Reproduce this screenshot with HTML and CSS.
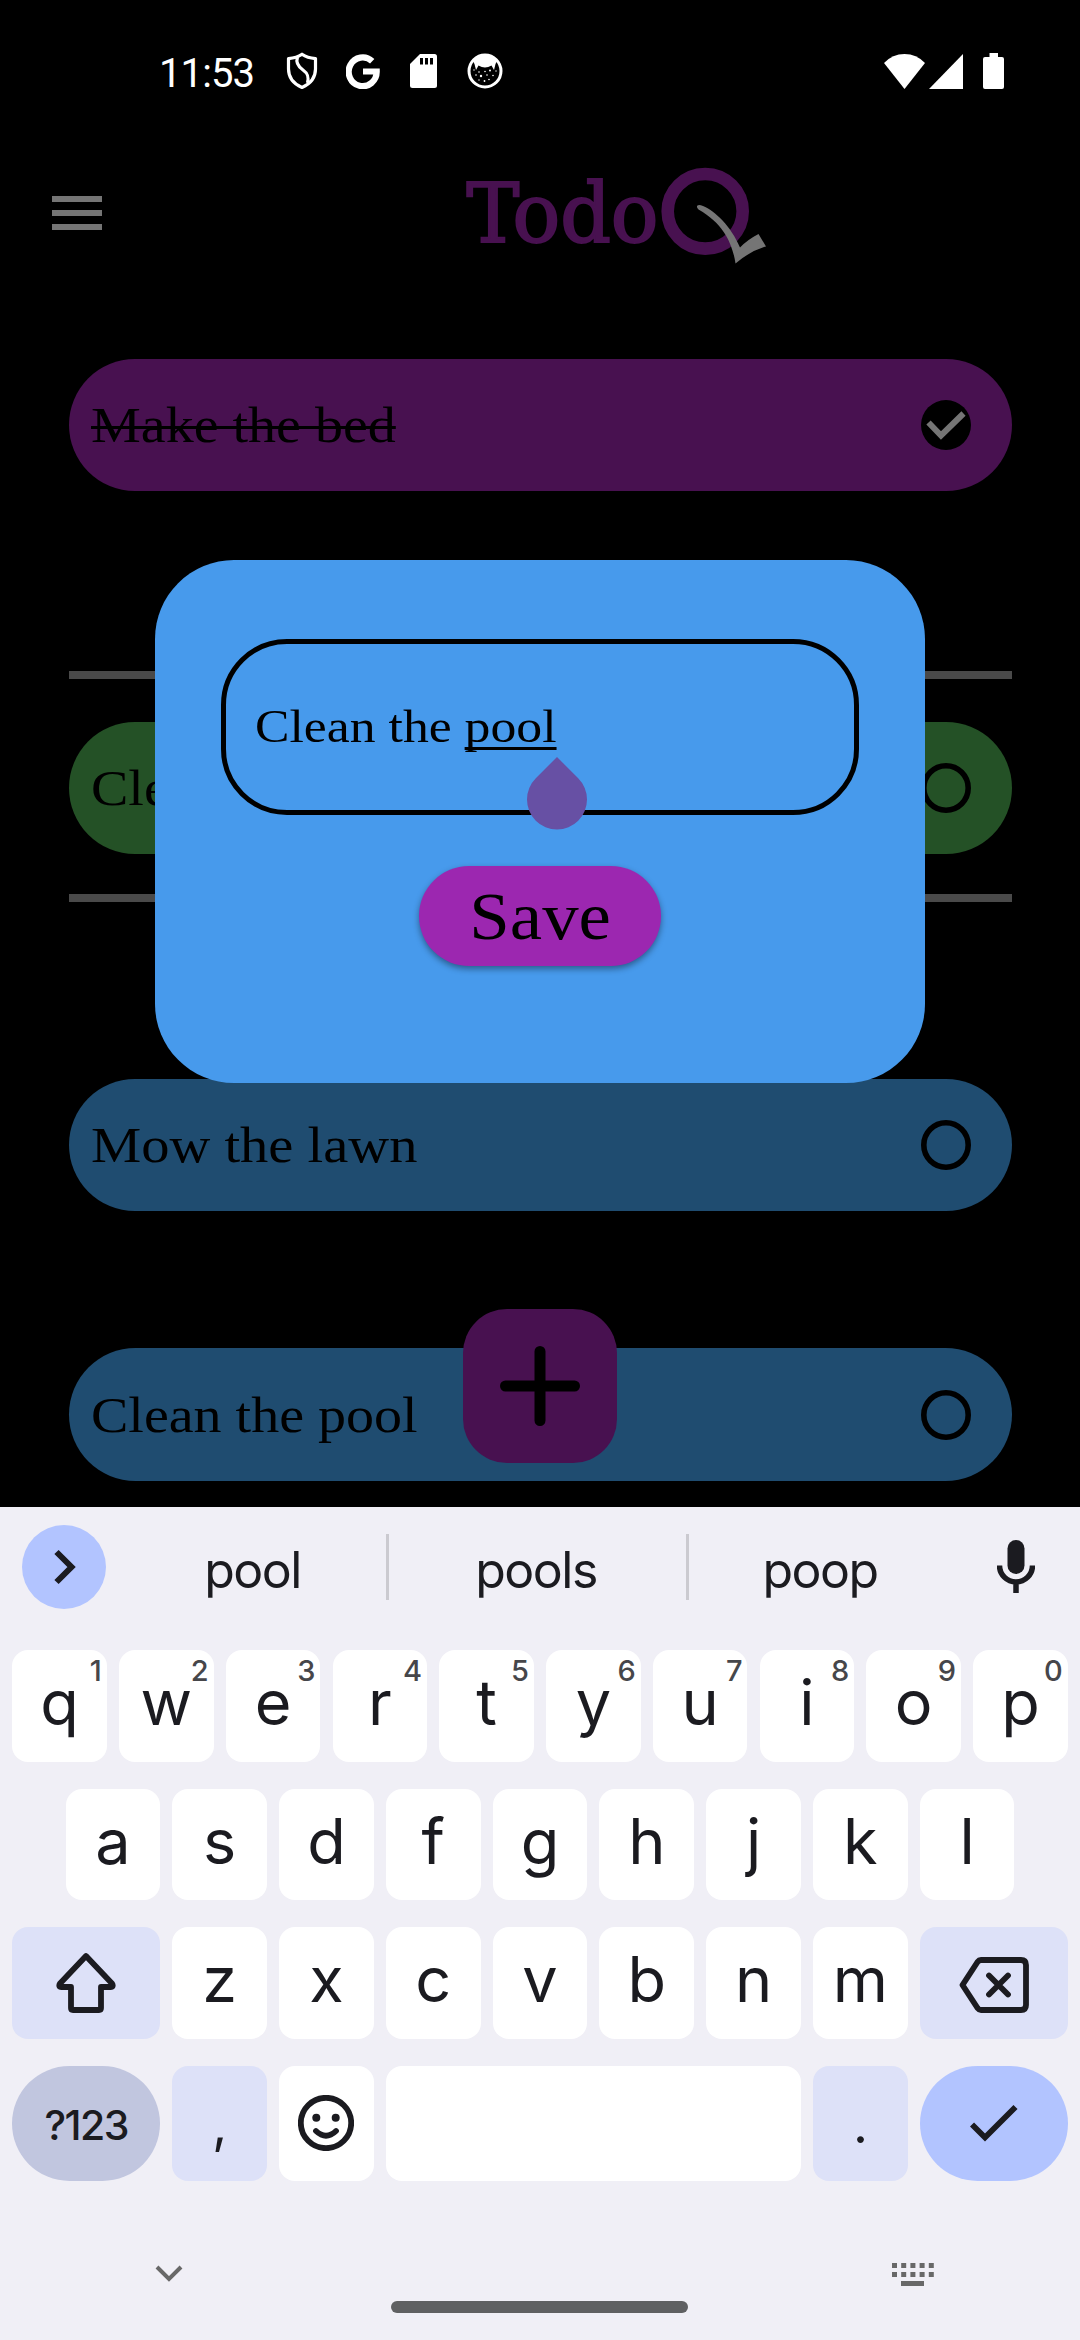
FILE: index.html
```html
<!DOCTYPE html>
<html lang="en">
<head>
<meta charset="utf-8">
<title>TodoQ</title>
<link rel="stylesheet" href="styles.css">
</head>
<body>
<div class="phone">
  <main class="app">
    <header class="status">
      <span class="clock">11:53</span>
      <div class="status-left">
        <svg class="ic-shield" width="32" height="38" viewBox="0 0 32 38" fill="none" stroke="#fff" stroke-width="3.2" stroke-linejoin="round"><path d="M16 2.2C12 5 7 6.200 2.500 6.600V17C2.500 25.500 8 32 16 35.500C24 32 29.500 25.500 29.500 17V6.600C25 6.200 20 5 16 2.200Z"/><path d="M11.500 5C9.500 11 12 14.500 17 18C22 21.500 23 25 21.500 31"/></svg>
        <svg class="ic-g" width="34" height="35" viewBox="0 0 34 35" fill="none" stroke="#fff" stroke-width="6.200"><path d="M26.200 7.200A14 14.400 0 1 0 30.700 17.500H17"/></svg>
        <svg class="ic-sd" width="27" height="34" viewBox="0 0 27 34"><path fill="#fff" d="M10 0H24.500Q27 0 27 2.500V31.500Q27 34 24.500 34H2.500Q0 34 0 31.500V10Z"/><path d="M10 4h3v6.500h-3zM15 4h3v6.500h-3zM20 4h3v6.500h-3z"/></svg>
        <svg class="ic-cat" width="36" height="36" viewBox="0 0 36 36"><circle cx="18" cy="18" r="16" fill="none" stroke="#fff" stroke-width="3"/><path fill="#fff" d="M6 8Q11 2 18 2T30 8L28.500 11L27 17L24.500 12.500Q18 16.500 11.500 12.500L9 17L7.500 11Z"/><g fill="#fff"><circle cx="7" cy="17" r=".7"/><circle cx="12" cy="19" r=".8"/><circle cx="18" cy="18.500" r=".8"/><circle cx="23" cy="17.500" r="1"/><circle cx="29" cy="18" r=".7"/><circle cx="9" cy="22" r=".8"/><circle cx="14" cy="23" r="1.200"/><circle cx="20" cy="22" r=".8"/><circle cx="26" cy="22.500" r=".8"/><circle cx="12" cy="27" r=".7"/><circle cx="17.500" cy="28" r=".9"/><circle cx="22" cy="26.500" r=".8"/></g></svg>
      </div>
      <div class="status-right">
        <svg class="ic-wifi" width="41" height="35" viewBox="0 0 41 35" fill="#fff"><path d="M0 9Q8.500 0 20.500 0T41 9L20.500 35Z"/></svg>
        <svg class="ic-signal" width="34" height="35" viewBox="0 0 34 35" fill="#fff"><path d="M34 0V35H0Z"/></svg>
        <svg class="ic-battery" width="21" height="36" viewBox="0 0 21 36" fill="#fff"><path d="M6.500 0h8.500v4h4q2 0 2 2v28q0 2-2 2h-17q-2 0-2-2v-28q0-2 2-2h4.500z"/></svg>
      </div>
    </header>

    <div class="topbar">
      <div class="burger"><i></i><i></i><i></i></div>
      <svg class="logo" width="306" height="104" viewBox="463 164 306 104">
        <text class="logo-text" x="466.500" y="242" textLength="192" lengthAdjust="spacingAndGlyphs">Todo</text>
        <ellipse class="logo-ring" cx="705.200" cy="211.300" rx="37.500" ry="37.300"/>
        <path class="logo-tick" d="M697.500 205.500Q699 204.300 703 206C715 211 731 226 740 247.500Q747 240 758.500 234L766 246.500Q750 251 735.500 263.500C733 247 726 225 698.500 209.500Q696 207 697.500 205.500Z"/>
      </svg>
    </div>

    <section class="tasks">
      <article class="task done"><span class="label">Make the bed</span>
        <svg class="mark" viewBox="0 0 50 50"><circle cx="25" cy="25" r="25"/><path class="tick" d="M7.500 22.500L20 35.500L42.500 13.500"/></svg></article>
      <hr class="rule rule-first">
      <article class="task active"><span class="label">Clean the pool</span>
        <svg class="mark" viewBox="0 0 50 50"><circle class="open" cx="25" cy="25" r="22.200"/></svg></article>
      <hr class="rule rule-second">
      <article class="task todo third"><span class="label">Mow the lawn</span>
        <svg class="mark" viewBox="0 0 50 50"><circle class="open" cx="25" cy="25" r="22.200"/></svg></article>
      <article class="task todo fourth"><span class="label">Clean the pool</span>
        <svg class="mark" viewBox="0 0 50 50"><circle class="open" cx="25" cy="25" r="22.200"/></svg></article>
    </section>

    <div class="fab"><svg width="80" height="80" viewBox="0 0 80 80"><path d="M40 5.500V74.500M5.500 40H74.500"/></svg></div>

    <section class="dialog">
      <div class="field"><span class="entry">Clean the <u>pool</u></span></div>
      <div class="save"><span>Save</span></div>
      <svg class="handle" width="60" height="73" viewBox="0 0 60 73"><path d="M30 0L51.200 21.300A30 30 0 1 1 8.800 21.300Z"/></svg>
    </section>
  </main>

  <section class="keyboard">
    <div class="suggest">
      <div class="expand"><svg width="84" height="84" viewBox="0 0 84 84"><path d="M34.500 27L49.500 42L34.500 57"/></svg></div>
      <span class="word">pool</span><i class="bar"></i><span class="word">pools</span><i class="bar"></i><span class="word">poop</span>
      <svg class="mic" width="38" height="54" viewBox="0 0 38 54"><rect x="10.500" y="0" width="17" height="34" rx="8.500"/><path d="M2.500 25.500A16.500 16.500 0 0 0 35.500 25.500M19 42V53"/></svg>
    </div>
    <div class="row">
      <div class="key">q<sup>1</sup></div><div class="key">w<sup>2</sup></div><div class="key">e<sup>3</sup></div><div class="key">r<sup>4</sup></div><div class="key">t<sup>5</sup></div><div class="key">y<sup>6</sup></div><div class="key">u<sup>7</sup></div><div class="key">i<sup>8</sup></div><div class="key">o<sup>9</sup></div><div class="key">p<sup>0</sup></div>
    </div>
    <div class="row">
      <div class="key">a</div><div class="key">s</div><div class="key">d</div><div class="key">f</div><div class="key">g</div><div class="key">h</div><div class="key">j</div><div class="key">k</div><div class="key">l</div>
    </div>
    <div class="row">
      <div class="key wide soft icon"><svg width="62" height="62" viewBox="0 0 62 62"><path d="M31 4L57 31.500Q59 35 55.500 35H46V56Q46 58 44 58H18Q16 58 16 56V35H6.500Q3 35 5 31.500Z"/></svg></div>
      <div class="key">z</div><div class="key">x</div><div class="key">c</div><div class="key">v</div><div class="key">b</div><div class="key">n</div><div class="key">m</div>
      <div class="key wide soft icon del"><svg width="70" height="56" viewBox="0 0 70 56"><path d="M22 3H62Q67 3 67 8V48Q67 53 62 53H22Q20 53 18.500 51L3.500 28L18.500 5Q20 3 22 3ZM30 18.500L49 37.500M49 18.500L30 37.500"/></svg></div>
    </div>
    <div class="row last">
      <div class="key wide mode">?123</div>
      <div class="key soft punct">,</div>
      <div class="key icon face"><svg width="56" height="56" viewBox="0 0 56 56"><ellipse cx="28" cy="28" rx="25.200" ry="25.200"/><path d="M18 36Q28 45.500 38 36"/><circle class="eye" cx="18.300" cy="22.800" r="4"/><circle class="eye" cx="37.700" cy="22.800" r="4"/></svg></div>
      <div class="key space"></div>
      <div class="key soft punct">.</div>
      <div class="key wide enter icon"><svg width="48" height="38" viewBox="0 0 48 38"><path d="M2 20.500L15 33.500L45.500 3"/></svg></div>
    </div>
    <div class="nav">
      <svg class="hide" width="28" height="17" viewBox="0 0 28 17"><path d="M2 2L14 14L26 2"/></svg>
      <i class="pill"></i>
      <svg class="switch" width="42" height="23" viewBox="0 0 42 23"><path d="M0 0h5v5h-5zM9.200 0h5v5h-5zM18.400 0h5v5h-5zM27.600 0h5v5h-5zM36.800 0h5v5h-5zM0 9h5v5h-5zM9.200 9h5v5h-5zM18.400 9h5v5h-5zM27.600 9h5v5h-5zM36.800 9h5v5h-5zM9 18h23v5h-23z"/></svg>
    </div>
  </section>
</div>
</body>
</html>
```
FILE: styles.css
```css
* { box-sizing: border-box; }
body { margin: 0; background: #000; }
svg { display: block; flex: none; }
.phone { width: 1080px; height: 2340px; display: flex; flex-direction: column; overflow: hidden; }

/* app */
.app { position: relative; height: 1507px; background: #000; font-family: "Liberation Serif", serif; color: #000; overflow: hidden; }
.status { height: 142px; padding: 0 76px 0 159px; display: flex; align-items: center; }
.clock { font: 40px/47px Roboto, sans-serif; letter-spacing: -0.9px; color: #fff; width: 127px; padding-top: 4px; }
.status-left { display: flex; align-items: center; gap: 30px; }
.ic-g { margin-left: -2px; }
.status-right { display: flex; align-items: center; gap: 4px; margin-left: auto; }
.ic-battery { margin-left: 16px; }

.topbar { display: flex; height: 216.5px; padding: 22px 0 0 52px; }
.burger { display: flex; flex-direction: column; gap: 8px; width: 50px; padding-top: 32px; margin-right: 361px; }
.burger i { height: 6px; background: #757575; }
.logo-text { font: 82px "DejaVu Serif Condensed", "DejaVu Serif", serif; font-stretch: condensed; fill: #481150; stroke: #481150; stroke-width: 2; }
.logo-ring { fill: none; stroke: #481150; stroke-width: 12.6; }
.logo-tick { fill: #757575; }

.tasks { padding: 0 68.5px; display: flex; flex-direction: column; }
.task { height: 132.3px; border-radius: 67px; padding: 0 41px 0 22px; display: flex; align-items: center; justify-content: space-between; }
.done { background: #481150; }
.active { background: #245126; }
.todo { background: #1f4c70; }
.label { font-size: 50px; line-height: 58px; white-space: nowrap; transform: scaleX(1.12); transform-origin: 0 50%; }
.third .label { transform: scaleX(1.13); }
.done .label { text-decoration: line-through; text-decoration-thickness: 3px; }
.mark { width: 50px; height: 50px; }
.open { fill: none; stroke: #000; stroke-width: 5.6; }
.tick { fill: none; stroke: #757575; stroke-width: 6; }
.rule { width: 100%; height: 8px; margin: 0; border: 0; background: #4a4a4a; }
.rule-first { margin: 180.5px 0 42.5px; }
.rule-second { margin: 40px 0 177px; }
.fourth { margin-top: 137px; }

.fab { position: absolute; left: 463px; top: 1309px; width: 154px; height: 154px; border-radius: 44px; background: #481150; display: flex; align-items: center; justify-content: center; }
.fab path { stroke: #000; stroke-width: 11; stroke-linecap: round; }

.dialog { position: absolute; left: 155px; top: 560px; width: 770px; height: 522.5px; border-radius: 79px; background: #479aec; padding-top: 79px; display: flex; flex-direction: column; align-items: center; gap: 51px; }
.field { width: 638px; height: 176px; border: 5.5px solid #000; border-radius: 66px; padding: 0 0 2px 29px; display: flex; align-items: center; }
.entry { font-size: 47px; line-height: 54px; white-space: nowrap; transform: scaleX(1.1); transform-origin: 0 50%; }
.entry u { text-decoration-thickness: 2.5px; text-underline-offset: 5px; text-decoration-skip-ink: none; }
.save { width: 242px; height: 99.5px; border-radius: 50px; background: #9c27b0; display: flex; align-items: center; justify-content: center; box-shadow: 0 3px 6px rgba(0,0,0,.4); }
.save span { font-size: 68px; line-height: 76px; transform: scaleX(1.07); }
.handle { position: absolute; left: 372px; top: 196.5px; }
.handle path { fill: #6750a4; }

/* keyboard */
.keyboard { flex: 1; background: #f0eff6; font-family: Inter, sans-serif; color: #1b1b20; display: flex; flex-direction: column; }
.suggest { height: 143px; padding: 0 45px 23px 22px; display: flex; align-items: center; }
.expand { width: 84px; height: 84px; border-radius: 50%; background: #b2c4ff; }
.expand path { fill: none; stroke: #1b1b20; stroke-width: 6; }
.word { width: 297px; font-size: 50px; line-height: 60px; letter-spacing: -1.5px; text-align: center; padding-top: 6px; }
.expand + .word { width: 280px; padding-left: 13px; }
.bar + .word { padding-right: 3px; }
.bar { width: 3px; height: 66px; background: #cbcad0; }
.bar ~ .bar + .word { width: 308px; padding-right: 46px; }
.mic { margin-left: auto; }
.mic rect { fill: #1b1b20; }
.mic path { fill: none; stroke: #1b1b20; stroke-width: 5.5; }
.row { display: flex; justify-content: center; gap: 12.2px; height: 111.5px; margin-bottom: 27px; }
.key { position: relative; width: 94.600px; border-radius: 16px; background: #fff; display: flex; align-items: center; justify-content: center; font-size: 63px; line-height: 76px; padding-bottom: 7px; }
.key sup { position: absolute; top: 4px; right: 5px; font-size: 29px; font-weight: 500; line-height: 34px; color: #46464a; }
.wide { width: 148px; }
.soft { background: #dde1f8; }
.icon { padding: 0; }
.icon path, .icon ellipse { fill: none; stroke: #1b1b20; stroke-width: 5.8; stroke-linecap: round; stroke-linejoin: round; }
.del { padding: 5px 0 0 0; }
.last { height: 115px; margin-bottom: 0; }
.mode { border-radius: 58px; background: #c1c6df; font-size: 41px; font-weight: 500; letter-spacing: -1.6px; padding: 4px 0 0; }
.punct { padding: 4px 0 0; font-size: 52px; }
.eye { fill: #1b1b20; }
.space { width: 415px; }
.enter { border-radius: 58px; background: #b2c4ff; }
.enter path { stroke-linecap: butt; stroke-linejoin: miter; }
.nav { flex: 1; display: flex; padding: 0 146px 0 154.500px; justify-content: space-between; }
.hide { margin-top: 84px; }
.hide path { fill: none; stroke: #686868; stroke-width: 4; }
.pill { width: 297px; height: 12px; border-radius: 6px; margin: 120px 0 0 5px; background: #5f6062; }
.switch { margin-top: 82px; }
.switch path { fill: #686868; }
```
